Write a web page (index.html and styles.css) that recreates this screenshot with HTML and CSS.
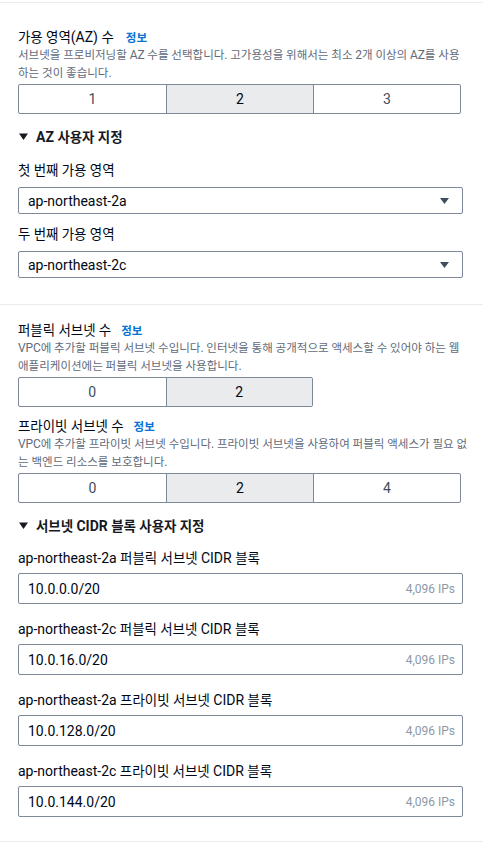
FILE: index.html
```html
<!DOCTYPE html>
<html lang="ko">
<head>
<meta charset="utf-8">
<title>VPC 설정</title>
<link rel="stylesheet" href="styles.css">
</head>
<body>
<main class="page">
  <section class="panel panel-az">
    <div class="group">
      <div class="label-row">
        <span class="label"><span class="ko">가용 영역</span>(AZ) <span class="ko">수</span></span>
        <a class="info info-wide" href="#"><span class="ko">정보</span></a>
      </div>
      <p class="desc"><span class="ko">서브넷을 프로비저닝할 </span>AZ <span class="ko">수를 선택합니다</span>. <span class="ko">고가용성을 위해서는 최소 </span>2<span class="ko">개 이상의 </span>AZ<span class="ko">를 사용</span><br><span class="ko">하는 것이 좋습니다</span>.</p>
      <div class="seg seg-3">
        <span class="seg-item">1</span>
        <span class="seg-item is-on">2</span>
        <span class="seg-item">3</span>
      </div>
    </div>

    <div class="expander">
      <svg class="caret" width="9" height="7" viewBox="0 0 9 7"><path d="M0 0.5h9L4.5 7z" fill="#16191f"/></svg>
      <span>AZ <span class="ko">사용자 지정</span></span>
    </div>

    <div class="fields fields-az">
      <div class="field">
        <div class="field-label"><span class="ko">첫 번째 가용 영역</span></div>
        <div class="select">
          <span class="select-value">ap-northeast-2a</span>
          <svg width="9" height="6" viewBox="0 0 9 6"><path d="M0 0h9L4.5 6z" fill="#414d5c"/></svg>
        </div>
      </div>
      <div class="field">
        <div class="field-label"><span class="ko">두 번째 가용 영역</span></div>
        <div class="select">
          <span class="select-value">ap-northeast-2c</span>
          <svg width="9" height="6" viewBox="0 0 9 6"><path d="M0 0h9L4.5 6z" fill="#414d5c"/></svg>
        </div>
      </div>
    </div>
  </section>

  <section class="panel panel-subnets">
    <div class="group">
      <div class="label-row">
        <span class="label"><span class="ko">퍼블릭 서브넷 수</span></span>
        <a class="info" href="#"><span class="ko">정보</span></a>
      </div>
      <p class="desc">VPC<span class="ko">에 추가할 퍼블릭 서브넷 수입니다</span>. <span class="ko">인터넷을 통해 공개적으로 액세스할 수 있어야 하는 웹</span><br><span class="ko">애플리케이션에는 퍼블릭 서브넷을 사용합니다</span>.</p>
      <div class="seg seg-2">
        <span class="seg-item">0</span>
        <span class="seg-item is-on">2</span>
      </div>
    </div>

    <div class="group group-next">
      <div class="label-row">
        <span class="label"><span class="ko">프라이빗 서브넷 수</span></span>
        <a class="info" href="#"><span class="ko">정보</span></a>
      </div>
      <p class="desc">VPC<span class="ko">에 추가할 프라이빗 서브넷 수입니다</span>. <span class="ko">프라이빗 서브넷을 사용하여 퍼블릭 액세스가 필요 없</span><br><span class="ko">는 백엔드 리소스를 보호합니다</span>.</p>
      <div class="seg seg-3">
        <span class="seg-item">0</span>
        <span class="seg-item is-on">2</span>
        <span class="seg-item">4</span>
      </div>
    </div>

    <div class="expander">
      <svg class="caret" width="9" height="7" viewBox="0 0 9 7"><path d="M0 0.5h9L4.5 7z" fill="#16191f"/></svg>
      <span><span class="ko">서브넷 </span>CIDR <span class="ko">블록 사용자 지정</span></span>
    </div>

    <div class="fields fields-cidr">
      <div class="field">
        <div class="field-label">ap-northeast-2a <span class="ko">퍼블릭 서브넷 </span>CIDR <span class="ko">블록</span></div>
        <div class="input"><span class="input-value">10.0.0.0/20</span><span class="input-hint">4,096 IPs</span></div>
      </div>
      <div class="field">
        <div class="field-label">ap-northeast-2c <span class="ko">퍼블릭 서브넷 </span>CIDR <span class="ko">블록</span></div>
        <div class="input"><span class="input-value">10.0.16.0/20</span><span class="input-hint">4,096 IPs</span></div>
      </div>
      <div class="field">
        <div class="field-label">ap-northeast-2a <span class="ko">프라이빗 서브넷 </span>CIDR <span class="ko">블록</span></div>
        <div class="input"><span class="input-value">10.0.128.0/20</span><span class="input-hint">4,096 IPs</span></div>
      </div>
      <div class="field">
        <div class="field-label">ap-northeast-2c <span class="ko">프라이빗 서브넷 </span>CIDR <span class="ko">블록</span></div>
        <div class="input"><span class="input-value">10.0.144.0/20</span><span class="input-hint">4,096 IPs</span></div>
      </div>
    </div>
  </section>
</main>
</body>
</html>
```

FILE: styles.css
```css
* { box-sizing: border-box; }

html, body {
  margin: 0;
  padding: 0;
  background: #ffffff;
}

body {
  font-family: Roboto, "Noto Sans CJK KR", sans-serif;
  color: #000716;
  font-size: 14px;
}

.ko {
  font-size: 0.96em;
  letter-spacing: 0;
}

.page {
  margin-top: 2px;
  border-top: 1px solid #e9ebed;
}

.panel {
  padding: 0 20px 0 18px;
  border-bottom: 1px solid #e9ebed;
}

.panel-az {
  padding-top: 25px;
  padding-bottom: 26px;
}

.panel-subnets {
  padding-top: 16px;
  padding-bottom: 24px;
}

.group-next {
  margin-top: 10px;
}

.label-row {
  display: flex;
  align-items: baseline;
  gap: 10px;
  height: 18px;
  line-height: 18px;
}

.label {
  font-size: 14px;
  color: #000716;
}

.info {
  font-size: 12px;
  font-weight: 700;
  color: #0972d3;
  text-decoration: none;
}

.info-wide {
  margin-left: 2px;
}

.desc {
  margin: 0;
  font-size: 12px;
  line-height: 18px;
  letter-spacing: -0.12px;
  white-space: nowrap;
  color: #5f6b7a;
}

.seg {
  display: grid;
  margin-top: 2px;
  height: 30px;
  border: 1px solid #7d8998;
  border-radius: 2px;
  overflow: hidden;
}

.seg-3 {
  width: 443px;
  grid-template-columns: repeat(3, 1fr);
}

.seg-2 {
  width: 295px;
  grid-template-columns: repeat(2, 1fr);
}

.seg-item {
  display: flex;
  align-items: center;
  justify-content: center;
  font-size: 14px;
  color: #414d5c;
}

.seg-item + .seg-item {
  border-left: 1px solid #7d8998;
}

.seg-item.is-on {
  background: #e9ebed;
  color: #000716;
}

.expander {
  display: flex;
  align-items: center;
  gap: 8px;
  margin-top: 12px;
  height: 20px;
  font-size: 14px;
  font-weight: 700;
  color: #16191f;
}

.caret {
  margin-left: 1px;
  flex: none;
}

.fields {
  display: flex;
  flex-direction: column;
  margin-top: 14px;
}

.fields-az { gap: 10px; }
.fields-cidr { gap: 15px; margin-top: 13px; }

.field-label {
  font-size: 14px;
  line-height: 20px;
  color: #000716;
}

.select {
  display: flex;
  align-items: center;
  justify-content: space-between;
  margin-top: 6px;
  height: 27px;
  padding: 0 13px 0 9px;
  border: 1px solid #7d8998;
  border-radius: 2px;
  font-size: 14px;
  color: #000716;
}

.input {
  display: flex;
  align-items: center;
  justify-content: space-between;
  margin-top: 4px;
  height: 31px;
  padding: 0 7px 0 9px;
  border: 1px solid #7d8998;
  border-radius: 2px;
  font-size: 14px;
  color: #000716;
}

.input-hint {
  font-size: 12px;
  color: #8d99a8;
}
```
